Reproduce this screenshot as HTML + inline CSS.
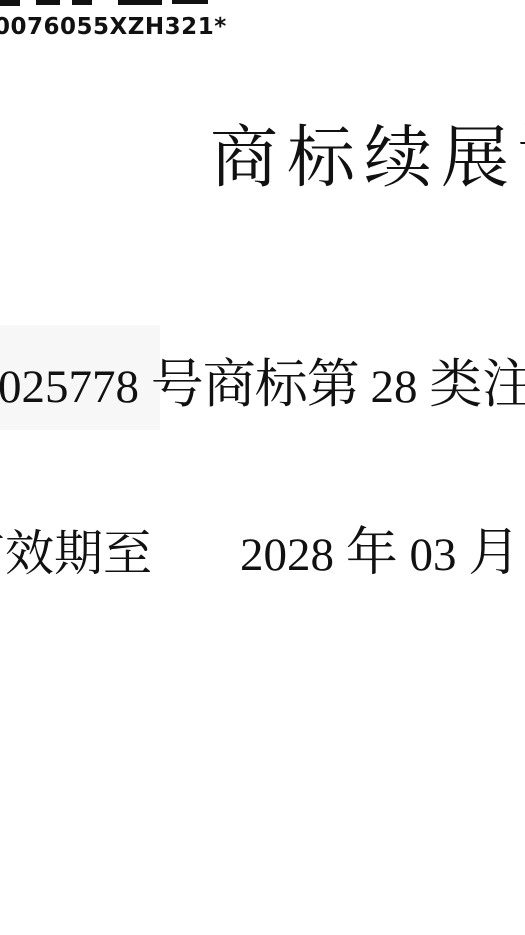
<!DOCTYPE html>
<html><head><meta charset="utf-8"><style>
html,body{margin:0;padding:0;background:#fff;width:525px;height:935px;overflow:hidden;position:relative}
.wrap{position:absolute;left:0;top:0;width:525px;height:935px;overflow:hidden}
.t{position:absolute;white-space:nowrap;color:#111;font-family:"Liberation Serif","Noto Serif CJK SC",serif}
.c{font-family:'Noto Serif CJK SC',serif}
</style></head><body><div class="wrap">
<div style="position:absolute;left:0;top:0;width:20px;height:6px;background:#111"></div>
<div style="position:absolute;left:36px;top:0;width:24px;height:5px;background:#111"></div>
<div style="position:absolute;left:72px;top:0;width:20px;height:5px;background:#111"></div>
<div style="position:absolute;left:118px;top:0;width:44px;height:5px;background:#111"></div>
<div style="position:absolute;left:172px;top:0;width:36px;height:4px;background:#111"></div>
<div class="t" style="left:-6px;top:14px;font-family:'DejaVu Sans',sans-serif;font-weight:bold;font-size:23px;line-height:26px;letter-spacing:0.5px">0076055XZH321*</div>
<div class="t c" style="left:210px;top:108px;font-size:68px;line-height:90px;letter-spacing:9px">商标续展证</div>
<div style="position:absolute;left:0;top:325px;width:160px;height:105px;background:#f7f7f7"></div>
<div class="t" style="left:-2px;top:348px;font-size:47px;line-height:64px">025778 <span class="c" style="font-size:53px;letter-spacing:-1px">号商标第</span> 28 <span class="c" style="font-size:53px">类注</span></div>
<div class="t" style="left:-44px;top:516px;font-size:47px;line-height:64px"><span class="c" style="font-size:49px">有效期至</span><span style="display:inline-block;width:88px"></span>2028 <span class="c" style="font-size:52px">年</span> 03 <span class="c" style="font-size:52px">月</span></div>
</div></body></html>
